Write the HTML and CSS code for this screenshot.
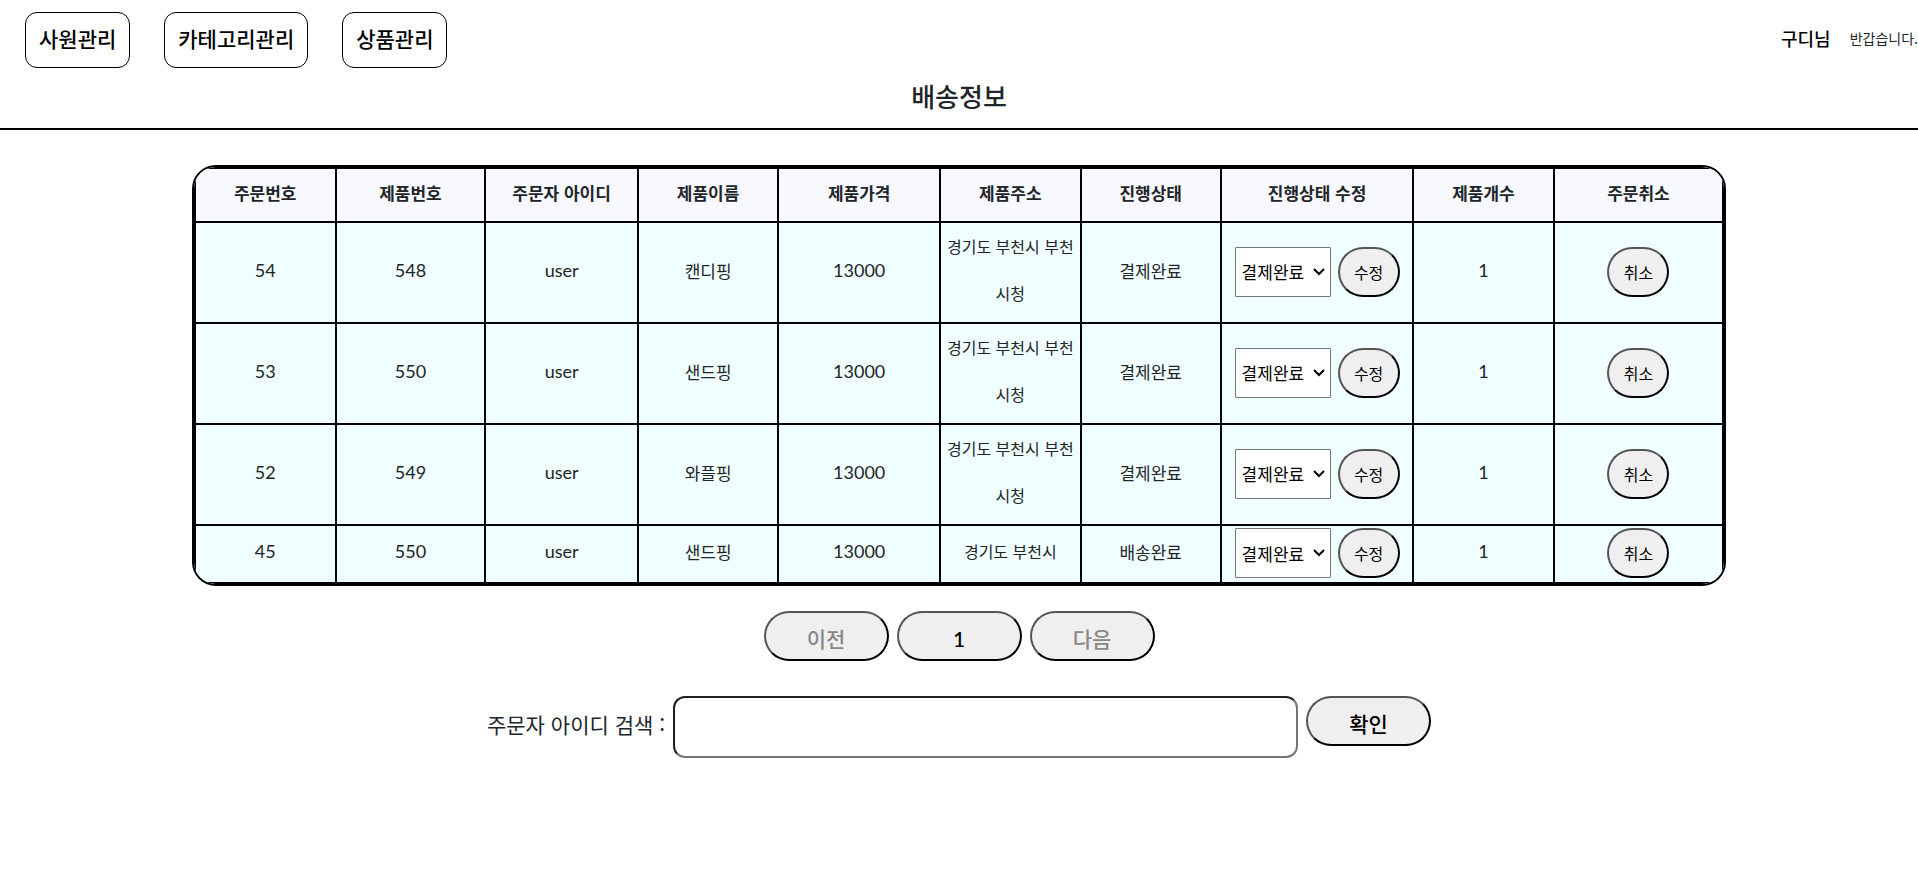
FILE: index.html
```html
<!DOCTYPE html>
<html lang="ko">
<head>
<meta charset="utf-8">
<meta name="viewport" content="width=device-width, initial-scale=1">
<title>배송정보</title>
<link rel="stylesheet" href="styles.css">
</head>
<body>
<header class="header">
  <div class="topbar">
    <nav class="nav">
      <button type="button" class="nav-button">사원관리</button>
      <button type="button" class="nav-button">카테고리관리</button>
      <button type="button" class="nav-button">상품관리</button>
    </nav>
    <div class="user"><strong class="user-name">구디님</strong><span class="greeting">반갑습니다.</span></div>
  </div>
  <h1 class="title">배송정보</h1>
</header>
<main class="main">
  <div class="table-frame">
    <table class="orders">
      <colgroup>
        <col class="col-order"><col class="col-product"><col class="col-user"><col class="col-name"><col class="col-price"><col class="col-address"><col class="col-state"><col class="col-edit"><col class="col-count"><col class="col-cancel">
      </colgroup>
      <thead>
        <tr><th>주문번호</th><th>제품번호</th><th>주문자 아이디</th><th>제품이름</th><th>제품가격</th><th>제품주소</th><th>진행상태</th><th>진행상태 수정</th><th>제품개수</th><th>주문취소</th></tr>
      </thead>
      <tbody>
        <tr>
          <td class="latin">54</td><td class="latin">548</td><td class="latin">user</td><td>캔디핑</td><td class="latin">13000</td><td class="address">경기도 부천시 부천시청</td><td>결제완료</td>
          <td class="action"><div class="edit"><select class="state" aria-label="진행상태"><option>결제완료</option><option>배송완료</option></select><button type="button" class="pill pill-small">수정</button></div></td>
          <td class="latin">1</td><td class="action"><div class="edit"><button type="button" class="pill pill-small">취소</button></div></td>
        </tr>
        <tr>
          <td class="latin">53</td><td class="latin">550</td><td class="latin">user</td><td>샌드핑</td><td class="latin">13000</td><td class="address">경기도 부천시 부천시청</td><td>결제완료</td>
          <td class="action"><div class="edit"><select class="state" aria-label="진행상태"><option>결제완료</option><option>배송완료</option></select><button type="button" class="pill pill-small">수정</button></div></td>
          <td class="latin">1</td><td class="action"><div class="edit"><button type="button" class="pill pill-small">취소</button></div></td>
        </tr>
        <tr>
          <td class="latin">52</td><td class="latin">549</td><td class="latin">user</td><td>와플핑</td><td class="latin">13000</td><td class="address">경기도 부천시 부천시청</td><td>결제완료</td>
          <td class="action"><div class="edit"><select class="state" aria-label="진행상태"><option>결제완료</option><option>배송완료</option></select><button type="button" class="pill pill-small">수정</button></div></td>
          <td class="latin">1</td><td class="action"><div class="edit"><button type="button" class="pill pill-small">취소</button></div></td>
        </tr>
        <tr>
          <td class="latin">45</td><td class="latin">550</td><td class="latin">user</td><td>샌드핑</td><td class="latin">13000</td><td class="address">경기도 부천시</td><td>배송완료</td>
          <td class="action"><div class="edit"><select class="state" aria-label="진행상태"><option>결제완료</option><option>배송완료</option></select><button type="button" class="pill pill-small">수정</button></div></td>
          <td class="latin">1</td><td class="action"><div class="edit"><button type="button" class="pill pill-small">취소</button></div></td>
        </tr>
      </tbody>
    </table>
  </div>
  <div class="pager">
    <button type="button" class="pill pill-wide" disabled>이전</button>
    <button type="button" class="pill pill-wide latin-button">1</button>
    <button type="button" class="pill pill-wide" disabled>다음</button>
  </div>
  <form class="search">
    <label class="search-label" for="user-id">주문자 아이디 검색 :</label>
    <input class="search-input" id="user-id" type="text">
    <button type="button" class="pill pill-wide">확인</button>
  </form>
</main>
</body>
</html>
```
FILE: styles.css
```css
* {
  box-sizing: border-box;
}

body {
  margin: 0;
  overflow-x: hidden;
  background: #fff;
  color: #212529;
  font-family: "Noto Sans CJK KR", sans-serif;
  font-size: 17px;
}

button,
select,
input {
  margin: 0;
  color: #000;
  font-family: inherit;
}

.header {
  border-bottom: 2px solid #000;
}

.topbar {
  display: flex;
  justify-content: space-between;
  align-items: center;
  padding: 12px 0 0 25px;
}

.nav {
  display: flex;
  gap: 34px;
}

.nav-button {
  height: 56px;
  padding: 0 13px 4px;
  border: 1px solid #000;
  border-radius: 12px;
  background: #fff;
  font-size: 21px;
  font-weight: 500;
}

.user {
  display: flex;
  align-items: center;
  gap: 19px;
  padding-bottom: 4px;
  white-space: nowrap;
}

.user-name {
  color: #000;
  font-size: 18px;
  font-weight: 500;
}

.greeting {
  font-size: 14px;
}

.title {
  margin: 0;
  padding: 8px 0 12px;
  font-size: 26px;
  font-weight: 500;
  line-height: 40px;
  text-align: center;
}

.main {
  display: flex;
  flex-direction: column;
  align-items: center;
  padding-top: 35px;
}

.table-frame {
  width: 80%;
  overflow: hidden;
  border: 2px solid #000;
  border-radius: 24px;
}

.orders {
  width: 100%;
  table-layout: fixed;
  border: 2px solid #000;
  border-collapse: separate;
  border-spacing: 0;
  background: azure;
  line-height: 47px;
  text-align: center;
}

.col-order {
  width: 9.1%;
}

.col-name,
.col-address,
.col-state,
.col-count {
  width: 9.2%;
}

.col-product {
  width: 9.8%;
}

.col-user {
  width: 10%;
}

.col-price {
  width: 10.6%;
}

.col-edit {
  width: 12.6%;
}

.col-cancel {
  width: 11.1%;
}

.orders td {
  padding: 0 2px 5px;
  border-top: 2px solid #000;
}

.orders th {
  padding: 0 0 5px;
  background: ghostwhite;
}

.orders th + th,
.orders td + td {
  border-left: 2px solid #000;
}

.orders .latin {
  font-family: Lato, sans-serif;
  font-size: 18px;
}

.orders .address {
  font-size: 16px;
}

.orders .action {
  padding: 2px 2px 4px;
}

.edit {
  display: flex;
  justify-content: center;
  align-items: center;
  gap: 7px;
}

.state {
  width: 96px;
  height: 50px;
  padding: 0 20px 0 6px;
  appearance: none;
  background: #fff url("data:image/svg+xml,%3Csvg xmlns='http://www.w3.org/2000/svg' width='12' height='8'%3E%3Cpath d='M1 1l5 5 5-5' fill='none' stroke='%23000' stroke-width='2'/%3E%3C/svg%3E") no-repeat right 5px center;
  border: 1px solid #767676;
  border-radius: 1px;
  font-size: 17px;
}

.pill {
  height: 50px;
  border: 2px outset #000;
  border-radius: 25px;
  background: #efefef;
}

.pill:disabled {
  color: #888;
}

.pill-small {
  width: 62px;
  padding: 0;
  font-size: 16px;
}

.pill-wide {
  width: 125px;
  padding: 4px 0 0;
  font-size: 21px;
  font-weight: 500;
}

.latin-button {
  font-family: Lato, sans-serif;
}

.pager {
  display: flex;
  gap: 8px;
  margin-top: 25px;
}

.search {
  display: flex;
  gap: 8px;
  width: 100%;
  justify-content: center;
  margin-top: 35px;
}

.search-label {
  font-size: 21px;
  line-height: 56px;
  white-space: nowrap;
}

.search-input {
  width: 625px;
  height: 62px;
  padding: 0 12px;
  border: 2px inset #767676;
  border-radius: 12px;
  background: #fff;
  font-size: 21px;
}
```
